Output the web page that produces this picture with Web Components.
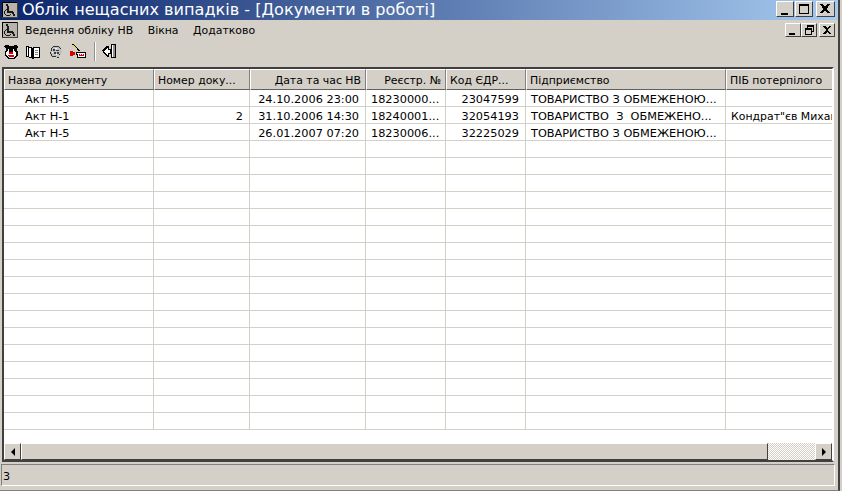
<!DOCTYPE html>
<html>
<head>
<meta charset="utf-8">
<title>Облік нещасних випадків</title>
<style>
html, body { margin: 0; padding: 0; background: #d4d0c8; }
body { font-family: "DejaVu Sans", sans-serif; width: 842px; height: 491px; overflow: hidden; }
</style>
</head>
<body>
<app-window>
  <title-bar slot="title">Облік нещасних випадків - [Документи в роботі]</title-bar>
  <menu-bar slot="menu"></menu-bar>
  <tool-bar slot="tools"></tool-bar>
  <data-grid slot="grid"></data-grid>
  <status-bar slot="status">3</status-bar>
</app-window>

<script>
const UI_FONT = '11.3px "DejaVu Sans", sans-serif';
const LABEL_SIZE = "10.9px";

const WHEELCHAIR = `<svg width="16" height="16" viewBox="0 0 16 16" shape-rendering="crispEdges">
  <rect width="16" height="16" fill="#b8b4ac"/>
  <path d="M0 0h16v1H0zM0 0h1v16H0z" fill="#000"/>
  <path d="M0 15h16v1H0zM15 0h1v16h-1z" fill="#404040"/>
  <path d="M4 2h2v2H4zM5 4h2v5h4v1h1v2h1v2h-2v-2h-1v-1H5z" fill="#1a1a1a"/>
  <path d="M4 7v1H3v1H2v3h1v1h1v1h4v-1h1v-1H8v1H4v-1H3V9h1V8h1V7z" fill="#1a1a1a"/>
</svg>`;

class AppWindow extends HTMLElement {
    constructor() {
        super();
        this.attachShadow({ mode: "open" }).innerHTML = `
<style>
:host { display: flex; flex-direction: column; width: 842px; height: 491px; box-sizing: border-box; border-right: 2px solid #d4d0c8; background: #d4d0c8; }
.inner { display: flex; flex-direction: column; flex: 1; border-right: 2px solid #404040; border-bottom: 1px solid #808080; min-height: 0; }
.body { display: flex; flex-direction: column; flex: 1; min-height: 0; padding: 0 4px 0 2px; }
</style>
<div class="inner">
  <slot name="title"></slot>
  <slot name="menu"></slot>
  <slot name="tools"></slot>
  <div class="body"><slot name="grid"></slot></div>
  <slot name="status"></slot>
</div>`;
    }
}

class TitleBar extends HTMLElement {
    constructor() {
        super();
        this.attachShadow({ mode: "open" }).innerHTML = `
<style>
:host { display: flex; align-items: center; height: 20px; padding-left: 2px; background: linear-gradient(90deg, #0a246a, #a6caf0); color: #fff; font: 16.1px/20px "DejaVu Sans", sans-serif; }
.text { margin-left: 4px; white-space: nowrap; flex: 1; }
win-button { margin-bottom: 2px; }
</style>
${WHEELCHAIR}
<span class="text"><slot></slot></span>
<win-button kind="min" size="big"></win-button>
<win-button kind="max" size="big" style="margin-left:1px"></win-button>
<win-button kind="close" size="big" style="margin:0 3px 2px 3px;width:19px"></win-button>`;
    }
}

class WinButton extends HTMLElement {
    constructor() {
        super();
        const kind = this.getAttribute("kind");
        const big = this.getAttribute("size") == "big";
        const glyphs = {
            min: big ? '<path d="M4 11h7v2H4z"/>' : '<path d="M3 9h6v2H3z"/>',
            max: '<path d="M3 2h10v10H3zM4 4v7h8V4z" fill-rule="evenodd"/>',
            restore: '<path d="M5 1h7v7h-2v3H3V4h2zM6 3v1h4v3h1V3zM4 6v4h5V6z" fill-rule="evenodd"/>',
            close: big ? '<path d="M3 2h3l2 3 2-3h3L9.5 7 13 11h-3L8 8.500 6 11H3l3.500-4z"/>' : '<path d="M3 2h2l2 2 2-2h2L8 6l3 4H9L7 8l-2 2H3l3-4z"/>'
        };
        this.attachShadow({ mode: "open" }).innerHTML = `
<style>
:host { display: block; flex: none; box-sizing: border-box; width: ${big ? 18 : 16}px; height: ${big ? 16 : 14}px; background: #d4d0c8; border: 1px solid; border-color: #fff #404040 #404040 #fff; }
svg { display: block; }
</style>
<svg width="${big ? 16 : 14}" height="${big ? 14 : 12}" viewBox="0 0 ${big ? 16 : 14} ${big ? 14 : 12}" shape-rendering="crispEdges" fill="#000">${glyphs[kind]}</svg>`;
    }
}

class MenuBar extends HTMLElement {
    constructor() {
        super();
        this.attachShadow({ mode: "open" }).innerHTML = `
<style>
:host { display: flex; align-items: center; height: 20px; padding-left: 2px; font: ${UI_FONT}; font-size: ${LABEL_SIZE}; color: #000; }
.item { margin-right: 14.5px; white-space: nowrap; }
.first { margin-left: 7px; }
.right { margin-left: auto; display: flex; padding-right: 3px; }
</style>
${WHEELCHAIR}
<span class="item first">Ведення обліку НВ</span>
<span class="item">Вікна</span>
<span class="item">Додатково</span>
<div class="right">
  <win-button kind="min" style="width:16px"></win-button>
  <win-button kind="restore"></win-button>
  <win-button kind="close" style="margin-left:2px"></win-button>
</div>`;
    }
}

class ToolBar extends HTMLElement {
    constructor() {
        super();
        this.attachShadow({ mode: "open" }).innerHTML = `
<style>
:host { display: flex; align-items: center; height: 27px; padding: 0 0 4px 3px; box-sizing: border-box; gap: 6px; }
svg { display: block; flex: none; }
.sep { width: 1px; height: 19px; background: #909090; margin: 0 -1px 0 1px; border-right: 1px solid #fff; }
</style>
<svg width="16" height="16" viewBox="0 0 16 16" shape-rendering="crispEdges">
  <path d="M2 1h3l1 1h4l1-1h3l1 2-1 2v1l1 2v3l-2 3-2 1H6l-2-1-2-3V8l1-2V5L1 3z"/>
  <path d="M4 7h2v1h4V7h2l1 2v2l-2 2-1 1H6l-1-1-2-2V9z" fill="#fff"/>
  <path d="M5 5h1v2H5zM10 5h1v2h-1z" fill="#fff"/>
  <path d="M6 8h4v2H6zM5 11h6v1l-1 1H6l-1-1z" fill="#d80000"/>
</svg>
<svg width="16" height="16" viewBox="0 0 16 16" shape-rendering="crispEdges">
  <path d="M1 2h3v1h3v1h1V3h7v11H9v1H7v-1H4v-1H1z"/>
  <path d="M2 3h1v9H2zM4 4h2v9H4z" fill="#fff"/>
  <path d="M9 4h5v9H9z" fill="#fff"/>
  <path d="M10 6h3v1h-3zM10 8h3v1h-3zM10 10h3v1h-3z" fill="#808080"/>
</svg>
<svg width="16" height="16" viewBox="0 0 16 16" shape-rendering="crispEdges" style="margin-left:1px;margin-right:-1px">
  <path d="M5 2h6l2 2 1 3-1 4-2 1-1 2-3-1H3L2 8l1-4z" fill="#c0c0c0"/>
  <path d="M5 2h6v1H5zM4 3h1v1H4zM3 4h1v3H3zM11 3h1v1h-1zM12 4h1v1h-1zM2 8h1v2H2zM3 10h1v2H3zM4 12h4v1H4zM9 13h2v1H9z" fill="#303030"/>
  <path d="M5 5h2v2H5zM8 6h3v1H8zM6 8h2v2H6zM9 8h2v2H9zM11 10h1v1h-1z" fill="#404040"/>
  <path d="M7 4h2v1H7zM4 8h1v1H4zM8 10h1v1H8z" fill="#fff"/>
</svg>
<svg width="18" height="16" viewBox="0 0 18 16" shape-rendering="crispEdges">
  <path d="M3 0h2v1h1v1h1v1h1v1h1v1h1v1h1v1h-2V6H8V5H7V4H6V3H5V2H4V1H3z"/>
  <path d="M4 1h1v1h1v1h1v1h1v1H7V4H6V3H5V2H4z" fill="#ffd800"/>
  <path d="M1 7h3v1h2v3H4v1H1z" fill="#e00000"/>
  <path d="M7 8h10v6H8v-3H7z" fill="#000"/>
  <path d="M8 9h8v4H9v-3H8z" fill="#fff"/>
  <path d="M10 10h1v2h-1zM12 10h1v2h-1zM14 10h1v2h-1zM11 11h1v1h-1zM13 11h1v1h-1z" fill="#e00000"/>
</svg>
<span class="sep"></span>
<svg width="16" height="17" viewBox="0 0 16 17" shape-rendering="crispEdges">
  <path d="M10 1h5v14h-5z"/>
  <path d="M11 2h1v12h-1z" fill="#fff"/>
  <path d="M12 2h2v12h-2z" fill="#909090"/>
  <path d="M6 3h2v3h2v5H8v3H6v-1H5v-1H4v-1H3v-1H2V8H1V7h1V6h1V5h1V4h1V3z"/>
  <path d="M6 5h1v2h2v3H7v2H6v-1H5v-1H4V9H3V8h1V7h1V6h1z" fill="#fff"/>
</svg>`;
    }
}

const COLUMNS = [
    { title: "Назва документу", width: 150 },
    { title: "Номер доку...", width: 96 },
    { title: "Дата та час НВ", width: 116, align: "right" },
    { title: "Реєстр. №", width: 80, align: "right" },
    { title: "Код ЄДР...", width: 80 },
    { title: "Підприємство", width: 200 },
    { title: "ПІБ потерпілого", width: 110 }
];
const ROWS = [
    ["Акт Н-5", "", "24.10.2006 23:00", "18230000...", "23047599", "ТОВАРИСТВО З ОБМЕЖЕНОЮ...", ""],
    ["Акт Н-1", "2", "31.10.2006 14:30", "18240001...", "32054193", "ТОВАРИСТВО  З  ОБМЕЖЕНО...", "Кондрат\"єв Михайло"],
    ["Акт Н-5", "", "26.01.2007 07:20", "18230006...", "32225029", "ТОВАРИСТВО З ОБМЕЖЕНОЮ...", ""]
];
const CELL_ALIGN = ["indent", "right", "right", "left", "right", "left", "left name"];
const TEMPLATE = COLUMNS.map(c => c.width + "px").join(" ");

class DataGrid extends HTMLElement {
    constructor() {
        super();
        let rows = "";
        for (let r = 0; r < 20; r++) {
            const row = ROWS[r] || ["", "", "", "", "", "", ""];
            rows += `<div class="row">` + row.map((v, i) => `<div class="cell ${CELL_ALIGN[i]}">${v}</div>`).join("") + `</div>`;
        }
        const head = COLUMNS.map(c => `<div class="hd ${c.align || ""}">${c.title}</div>`).join("");
        this.attachShadow({ mode: "open" }).innerHTML = `
<style>
:host { display: flex; flex-direction: column; box-sizing: border-box; height: 395px; border: 2px solid; border-color: #404040 #fff #404040 #404040; background: #fff; font: ${UI_FONT}; color: #000; overflow: hidden; }
.head, .row { display: grid; grid-template-columns: ${TEMPLATE}; }
.hd { box-sizing: border-box; height: 21px; line-height: 22px; padding: 0 4px 0 3px; font-size: ${LABEL_SIZE}; background: #d4d0c8; border-top: 1px solid #fff; border-left: 1px solid #fff; border-right: 1px solid #808080; border-bottom: 1px solid #606060; white-space: nowrap; overflow: hidden; }
.hd.right { text-align: right; }
.rows { flex: 1; overflow: hidden; min-height: 0; }
.row { height: 17px; }
.cell { box-sizing: border-box; height: 17px; line-height: 19px; padding: 0 5px; border-right: 1px solid #d4d0c8; border-bottom: 1px solid #d4d0c8; white-space: pre; overflow: hidden; }
.cell.indent { padding-left: 21px; }
.cell.right { text-align: right; padding-right: 6px; }
.cell.name { font-size: ${LABEL_SIZE}; }
</style>
<div class="head">${head}</div>
<div class="rows">${rows}</div>
<h-scrollbar></h-scrollbar>`;
    }
}

class HScrollbar extends HTMLElement {
    constructor() {
        super();
        this.attachShadow({ mode: "open" }).innerHTML = `
<style>
:host { display: flex; height: 17px; flex: none; background: #d4d0c8; }
.b { box-sizing: border-box; flex: none; height: 17px; background: #d4d0c8; border: 1px solid; border-color: #fff #404040 #404040 #fff; display: flex; align-items: center; justify-content: center; }
.arr { width: 17px; }
.thumb { width: 747px; }
.track { flex: none; width: 47px; background: repeating-conic-gradient(#fff 0 25%, #d4d0c8 0 50%) 0 0 / 2px 2px; }
i { display: block; width: 0; height: 0; border: 4px solid transparent; }
.l { border-right-color: #000; border-left-width: 0; }
.r { border-left-color: #000; border-right-width: 0; }
</style>
<div class="b arr"><i class="l"></i></div>
<div class="b thumb"></div>
<div class="track"></div>
<div class="b arr"><i class="r"></i></div>`;
    }
}

class StatusBar extends HTMLElement {
    constructor() {
        super();
        this.attachShadow({ mode: "open" }).innerHTML = `
<style>
:host { display: block; flex: none; box-sizing: border-box; height: 22px; margin: 2px 3px 4px 1px; padding-left: 1px; border: 1px solid; border-color: #808080 #fff #fff #808080; font: 11.3px/23px "DejaVu Sans", sans-serif; color: #000; }
</style>
<slot></slot>`;
    }
}

customElements.define("win-button", WinButton);
customElements.define("title-bar", TitleBar);
customElements.define("menu-bar", MenuBar);
customElements.define("tool-bar", ToolBar);
customElements.define("h-scrollbar", HScrollbar);
customElements.define("data-grid", DataGrid);
customElements.define("status-bar", StatusBar);
customElements.define("app-window", AppWindow);
</script>
</body>
</html>
